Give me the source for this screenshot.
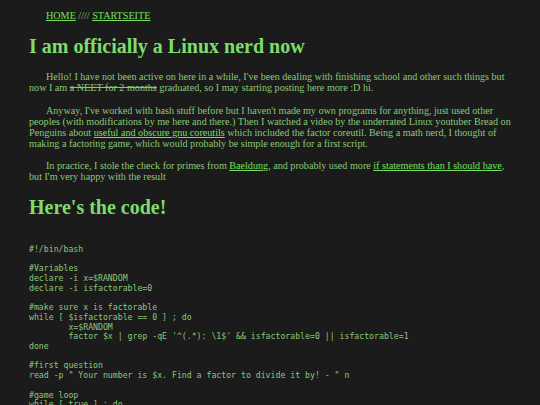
import React from "react";

const code = `#!/bin/bash

#Variables
declare -i x=$RANDOM
declare -i isfactorable=0

#make sure x is factorable
while [ $isfactorable == 0 ] ; do
	x=$RANDOM
	factor $x | grep -qE '^(.*): \\1$' && isfactorable=0 || isfactorable=1
done

#first question
read -p " Your number is $x. Find a factor to divide it by! - " n

#game loop
while [ true ] ; do
	read -p " " n
done`;

const Link: React.FC<{ children: React.ReactNode }> = ({ children }) => (
  <a href="#" className="text-[#72e05c] underline">
    {children}
  </a>
);

export default function App() {
  return (
    <div className="min-h-screen w-full overflow-hidden bg-[#1b1b1b] pl-[29px] pr-[23px] pt-[10px] font-['Liberation_Serif',serif] text-[10.15px] leading-[11px] text-[#8cc77a]">
      <p className="indent-[17px]">
        <Link>HOME</Link> //// <Link>STARTSEITE</Link>
      </p>

      <h1 className="mt-[14px] text-[20px] font-bold leading-[23px] text-[#7edc6c]">
        I am officially a Linux nerd now
      </h1>

      <p className="mt-[13px] indent-[17px]">
        Hello! I have not been active on here in a while, I've been dealing with finishing school and other such things but
        now I am <s>a NEET for 2 months</s> graduated, so I may starting posting here more :D hi.
      </p>
      <p className="mt-[12px] indent-[17px]">
        Anyway, I've worked with bash stuff before but I haven't made my own programs for anything, just used other
        peoples (with modifications by me here and there.) Then I watched a video by the underrated Linux youtuber Bread on
        Penguins about <Link>useful and obscure gnu coreutils</Link> which included the factor coreutil. Being a math nerd, I thought of
        making a factoring game, which would probably be simple enough for a first script.
      </p>
      <p className="mt-[11px] indent-[17px]">
        In practice, I stole the check for primes from <Link>Baeldung</Link>, and probably used more{" "}
        <Link>if statements than I should have</Link>, but I'm very happy with the result
      </p>

      <h2 className="mt-[14px] text-[20px] font-bold leading-[23px] text-[#7edc6c]">
        Here's the code!
      </h2>

      <pre className="mt-[26px] whitespace-pre font-['DejaVu_Sans_Mono',monospace] text-[8.2px] leading-[9.7px] text-[#8cc77a] [tab-size:8]">
        {code}
      </pre>
    </div>
  );
}
